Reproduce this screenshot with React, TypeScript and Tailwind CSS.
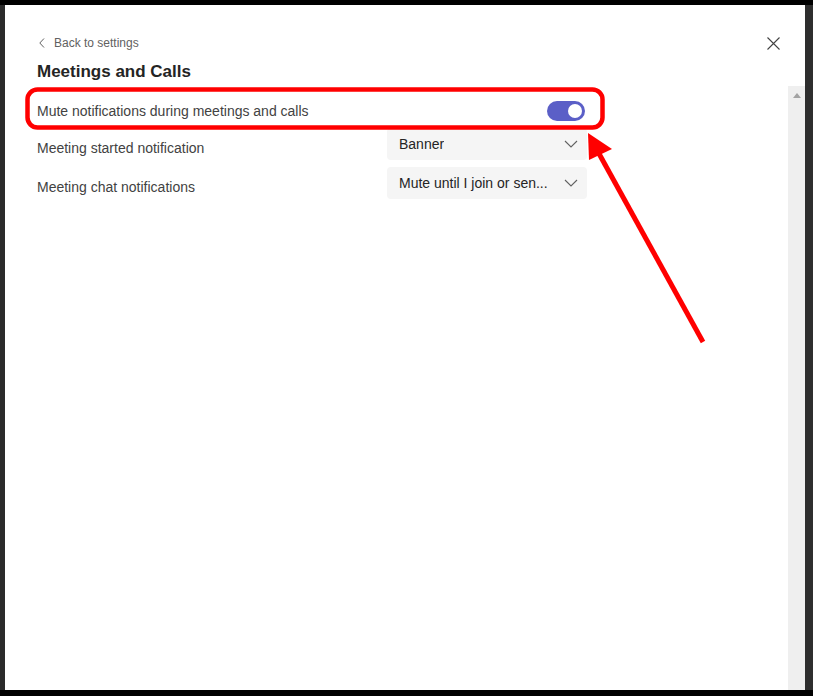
import React from "react";

function Toggle() {
  return (
    <div className="w-[38px] h-[20px] rounded-full bg-[#5b5fc7] flex items-center justify-end pr-[3px]">
      <div className="w-[14px] h-[14px] rounded-full bg-white" />
    </div>
  );
}

function Chevron() {
  return (
    <svg width="14" height="8" viewBox="0 0 14 8" fill="none">
      <path d="M1 1 L7 7 L13 1" stroke="#616161" strokeWidth="1.1" />
    </svg>
  );
}

function Dropdown({ value }: { value: string }) {
  return (
    <div className="w-[200px] h-[32px] bg-[#f5f5f5] rounded-[4px] flex items-center justify-between pl-3 pr-[9px]">
      <span className="text-[14px] text-[#242424] truncate">{value}</span>
      <Chevron />
    </div>
  );
}

function Annotation() {
  return (
    <svg
      className="absolute inset-0 pointer-events-none"
      width="813"
      height="696"
      viewBox="0 0 813 696"
    >
      <rect
        x="27.5"
        y="89.5"
        width="575"
        height="38"
        rx="10"
        fill="none"
        stroke="#ff0000"
        strokeWidth="4.5"
      />
      <line x1="703" y1="342" x2="597" y2="150" stroke="#ff0000" strokeWidth="5" />
      <polygon points="588,133 612,149 589,160" fill="#ff0000" />
    </svg>
  );
}

export default function App() {
  return (
    <div
      className="relative w-[813px] h-[696px] bg-black pt-[5px] pb-[6px] flex overflow-hidden"
      style={{ fontFamily: '"Segoe UI", "Liberation Sans", Arial, sans-serif' }}
    >
      <div className="w-[5px] bg-[#2b2b2b]" />
      <div className="flex-1 bg-white flex flex-col">
        <div className="h-[81px] pl-8 pr-[25px] pt-[26px] flex justify-between">
          <div>
            <div className="flex items-center gap-[9px] h-[24px] pl-[2px] text-[12px] text-[#616161]">
              <svg width="6" height="10" viewBox="0 0 6 10" fill="none">
                <path d="M5 0.5 L0.8 5 L5 9.5" stroke="#616161" strokeWidth="1" />
              </svg>
              <span>Back to settings</span>
            </div>
            <h1 className="mt-[5px] text-[17px] leading-[24px] font-semibold text-[#242424]">
              Meetings and Calls
            </h1>
          </div>
          <div className="h-[24px] flex items-center">
            <svg width="13" height="13" viewBox="0 0 13 13" fill="none">
              <path d="M0.5 0.5 L12.5 12.5 M12.5 0.5 L0.5 12.5" stroke="#424242" strokeWidth="1.1" />
            </svg>
          </div>
        </div>
        <div className="flex-1 flex">
          <div className="flex-1 pl-8 pt-[15px] flex flex-col gap-[7px] text-[14px] text-[#424242]">
            <div className="w-[548px] h-[20px] flex items-center justify-between">
              <span>Mute notifications during meetings and calls</span>
              <Toggle />
            </div>
            <div className="flex items-start">
              <span className="w-[350px] pt-[10px] leading-[20px]">Meeting started notification</span>
              <Dropdown value="Banner" />
            </div>
            <div className="flex items-start">
              <span className="w-[350px] pt-[10px] leading-[20px]">Meeting chat notifications</span>
              <Dropdown value="Mute until I join or sen..." />
            </div>
          </div>
          <div className="w-[17px] bg-[#efefef] flex justify-center pt-[7px]">
            <svg width="8" height="5" viewBox="0 0 8 5">
              <polygon points="4,0 8,5 0,5" fill="#a3a3a3" />
            </svg>
          </div>
        </div>
      </div>
      <div className="w-[8px] bg-[#2e2e2e]" />
      <Annotation />
    </div>
  );
}
